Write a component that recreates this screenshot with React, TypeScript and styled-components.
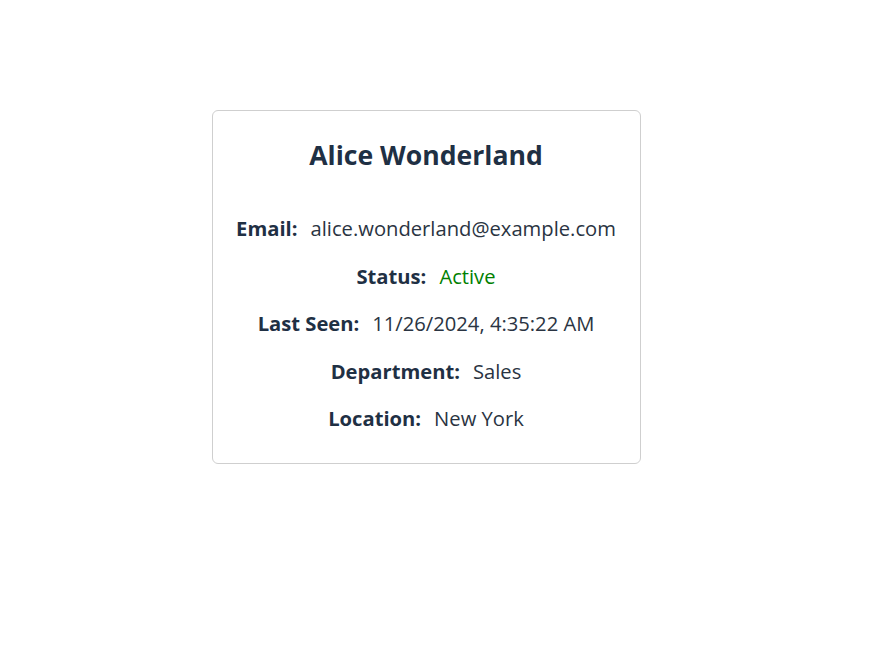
import React from "react";
import styled, { createGlobalStyle } from "styled-components";

const Global = createGlobalStyle`
  body {
    margin: 0;
    background: #ffffff;
    font-family: "Segoe UI", "Open Sans", "Noto Sans", sans-serif;
  }
`;

const Page = styled.div`
  display: flex;
  justify-content: center;
  padding: 110px 26px 0 0;
`;

const Card = styled.div`
  box-sizing: border-box;
  width: 429px;
  border: 1px solid #cfcfcf;
  border-radius: 6px;
  padding: 28px 20px 31px;
  display: flex;
  flex-direction: column;
  align-items: center;
  color: #1f3044;
`;

const Title = styled.h2`
  margin: 0 0 43px;
  font-size: 26.6px;
  line-height: 32px;
  font-weight: 700;
`;

const Rows = styled.div`
  display: flex;
  flex-direction: column;
  align-items: center;
  gap: 19.5px;
`;

const Row = styled.div`
  display: flex;
  gap: 13px;
  font-size: 20.2px;
  line-height: 28px;
  white-space: nowrap;
`;

const Label = styled.span`
  font-weight: 700;
`;

const Value = styled.span<{ $tone?: string }>`
  color: ${(p) => p.$tone ?? "#2a3442"};
`;

const rows: { label: string; value: string; tone?: string }[] = [
  { label: "Email:", value: "alice.wonderland@example.com" },
  { label: "Status:", value: "Active", tone: "#008000" },
  { label: "Last Seen:", value: "11/26/2024, 4:35:22 AM" },
  { label: "Department:", value: "Sales" },
  { label: "Location:", value: "New York" },
];

export default function App() {
  return (
    <>
      <Global />
      <Page>
        <Card>
          <Title>Alice Wonderland</Title>
          <Rows>
            {rows.map((r) => (
              <Row key={r.label}>
                <Label>{r.label}</Label>
                <Value $tone={r.tone}>{r.value}</Value>
              </Row>
            ))}
          </Rows>
        </Card>
      </Page>
    </>
  );
}
